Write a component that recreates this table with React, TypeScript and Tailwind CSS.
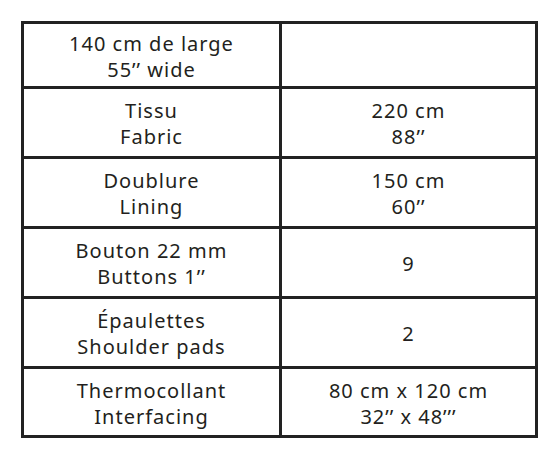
import React from "react";

const rows: [string[], string[], number][] = [
  [["140 cm de large", "55’’ wide"], [], 62],
  [["Tissu", "Fabric"], ["220 cm", "88’’"], 67],
  [["Doublure", "Lining"], ["150 cm", "60’’"], 67],
  [["Bouton 22 mm", "Buttons 1’’"], ["9"], 67],
  [["Épaulettes", "Shoulder pads"], ["2"], 67],
  [["Thermocollant", "Interfacing"], ["80 cm x 120 cm", "32’’ x 48’’’"], 66],
];

function Cell({ lines, className }: { lines: string[]; className: string }) {
  return (
    <div className={className}>
      {lines.map((l, i) => (
        <div key={i}>{l}</div>
      ))}
    </div>
  );
}

export default function App() {
  return (
    <div className="w-[558px] h-[464px] bg-white pt-[21px] pl-[21px] text-[#231f20] font-['Noto_Sans',sans-serif] text-[20px] leading-[26px] tracking-[1px]">
      <div className="w-[517px] border-[3px] border-[#222]">
        {rows.map(([l, r, h], i) => (
          <div
            key={i}
            className={i === 0 ? "flex" : "flex border-t-[3px] border-[#222]"}
            style={{ height: h + (i === 0 ? 0 : 3) }}
          >
            <Cell
              lines={l}
              className="w-[258px] shrink-0 border-r-[3px] border-[#222] flex flex-col items-center justify-center text-center pt-[3px]"
            />
            <Cell
              lines={r}
              className="flex-1 flex flex-col items-center justify-center text-center pt-[3px]"
            />
          </div>
        ))}
      </div>
    </div>
  );
}
